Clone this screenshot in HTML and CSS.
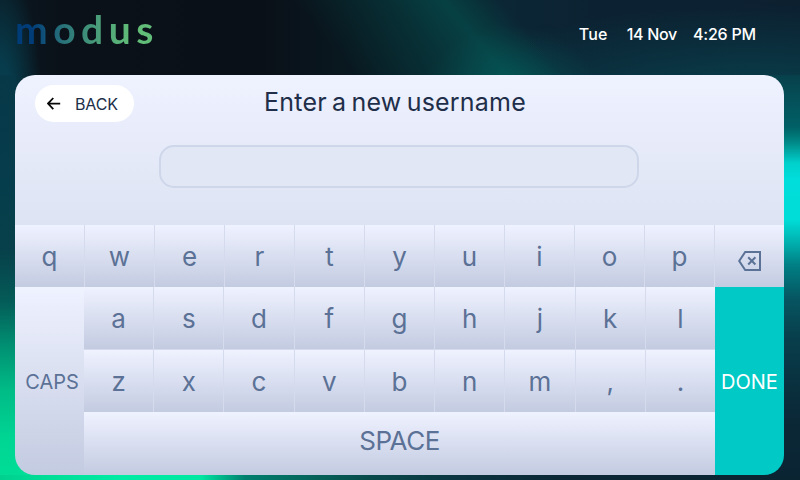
FILE: index.html
```html
<!DOCTYPE html>
<html lang="en">
<head>
<meta charset="utf-8">
<title>Enter a new username</title>
<link rel="stylesheet" href="styles.css">
</head>
<body>
<header class="topbar">
  <div class="logo"><span>modus</span></div>
  <div class="clock"><span class="day">Tue</span><span class="date">14 Nov</span><span class="time">4:26 PM</span></div>
</header>
<main class="panel">
  <section class="form">
    <div class="heading">
      <button class="back"><svg width="14" height="14" viewBox="0 0 14 14"><path d="M13.2 6.6H1.6M6.3 1L1 6.6l5.3 5.6" fill="none" stroke="#080808" stroke-width="1.8"/></svg><span>BACK</span></button>
      <h1><span>Enter a new username</span></h1>
    </div>
    <input class="field" type="text" aria-label="Username">
  </section>
  <section class="keyboard">
    <div class="row-top">
      <button>q</button><button>w</button><button>e</button><button>r</button><button>t</button><button>y</button><button>u</button><button>i</button><button>o</button><button>p</button>
      <button class="erase" aria-label="Backspace"><svg width="24" height="20" viewBox="0 0 24 20"><path d="M7.2 1H22v18H7.2L1.2 10z" fill="none" stroke="#5b7196" stroke-width="2"/><path d="M10.2 6.3l7.2 7.2M17.4 6.3l-7.2 7.2" fill="none" stroke="#5b7196" stroke-width="2"/></svg></button>
    </div>
    <div class="lower">
      <button class="caps"><span>CAPS</span></button>
      <div class="middle">
        <div class="letters">
          <button>a</button><button>s</button><button>d</button><button>f</button><button>g</button><button>h</button><button>j</button><button>k</button><button>l</button>
          <button>z</button><button>x</button><button>c</button><button>v</button><button>b</button><button>n</button><button>m</button><button>,</button><button>.</button>
        </div>
        <button class="space"><span>SPACE</span></button>
      </div>
      <button class="done"><span>DONE</span></button>
    </div>
  </section>
</main>
</body>
</html>
```
FILE: styles.css
```css
* { box-sizing: border-box; margin: 0; }

body {
  width: 800px;
  height: 480px;
  overflow: hidden;
  display: flex;
  flex-direction: column;
  font-family: Inter, "Liberation Sans", sans-serif;
  background:
    linear-gradient(90deg, #00d08e 0, #00dc95 40px, #00eba4 120px, #00e8a2 200px, #007f6e 245px, #056058 320px, #084a4b 370px, #0b3440 460px, #0b2634 570px, #0a2432 800px) 0 475px / 800px 5px no-repeat,
    linear-gradient(180deg, #07404b 0, #04535c 30px, #006065 52px, #008a88 68px, #00d0cc 88px, #00dedb 105px, #00dcd7 145px, #00abaa 170px, #007f84 190px, #065460 225px, #083f4c 262px, #0a2f3d 315px, #0b2837 345px, #0b2434 400px) 770px 75px / 30px 400px no-repeat,
    linear-gradient(180deg, #073848 0, #063d4c 110px, #07404a 175px, #045a57 225px, #008f72 270px, #00bb86 315px, #00d694 365px, #00dc95 400px) 0 75px / 15px 400px no-repeat,
    linear-gradient(90deg, #00dc95, #00e099) 15px 440px / 25px 35px no-repeat,
    radial-gradient(ellipse 42px 140px at 0 105px, #073c4c 30%, #073c4c00) 0 0 / 800px 100px no-repeat,
    radial-gradient(ellipse 90px 75px at 510px 100px, #00706a80, #00706a00) 0 0 / 800px 100px no-repeat,
    linear-gradient(50deg, #06464700 105px, #06464770 180px, #064a4bc0 220px, #06464790 236px, #06464700 264px) 240px 0 / 500px 100px no-repeat,
    radial-gradient(ellipse 340px 105px at 760px 110px, #084450, #08445000) 0 0 / 800px 100px no-repeat,
    linear-gradient(90deg, #0b1821 0, #0a1119 60px, #0a1018 260px, #091820 350px, #08222a 430px, #0b2634 500px, #0c2232 600px, #0c2030 800px);
}

button {
  border: 0;
  padding: 0;
  font-family: inherit;
  color: #5b7196;
}

.topbar {
  display: flex;
  justify-content: space-between;
  height: 75px;
  padding: 10px 44px 0 15px;
}

.logo {
  font: 700 39px/39px Lato, sans-serif;
  letter-spacing: 5.5px;
}

.logo span {
  background: linear-gradient(90deg, #003c78 12%, #27707a 32%, #499d79 57%, #61bd78 80%);
  background-clip: text;
  -webkit-background-clip: text;
  color: transparent;
}

.clock {
  display: flex;
  padding-top: 14px;
  font-size: 16px;
  line-height: 20px;
  font-weight: 500;
  color: #fff;
}

.day { margin-right: 19px; letter-spacing: .2px; }
.date { margin-right: 16px; letter-spacing: -.3px; }
.time { letter-spacing: -.2px; }

.panel {
  width: 769px;
  height: 400px;
  margin-left: 15px;
  border-radius: 20px;
  overflow: hidden;
}

.form {
  height: 150px;
  padding: 10px 20px 0;
  background: linear-gradient(#eff2ff, #dde3f3);
}

.heading {
  display: grid;
  grid-template-columns: 99px 1fr 99px;
  height: 37px;
}

.back {
  display: flex;
  align-items: center;
  gap: 14px;
  padding: 1px 0 0 12px;
  border-radius: 19px;
  background: #fff;
  color: #202e49;
  font-size: 16px;
}

.back span { letter-spacing: -.1px; }

h1 {
  padding-right: 9px;
  text-align: center;
  font-size: 25px;
  line-height: 35px;
  font-weight: 400;
  letter-spacing: .2px;
  word-spacing: -2px;
  color: #202e49;
}

.field {
  display: block;
  width: 480px;
  height: 43px;
  margin: 23px 0 0 124px;
  padding: 0 14px;
  border: 2px solid #ced6e9;
  border-radius: 15px;
  background: #e1e7f5;
  font: inherit;
  font-size: 20px;
  outline: 0;
}

.row-top {
  display: grid;
  grid-template-columns: repeat(11, 1fr);
  gap: 1px;
  height: 62px;
}

.row-top, .letters { background: #d5dbed; }

.row-top button, .letters button {
  padding-top: 1px;
  background: linear-gradient(#eff2ff, #c3cbe1);
  font-size: 26px;
  line-height: 32px;
}

.row-top .erase {
  display: flex;
  justify-content: center;
  align-items: center;
  padding-top: 10px;
}

.lower {
  display: grid;
  grid-template-columns: 69px 631px 69px;
  height: 188px;
}

.caps, .done {
  padding-top: 2px;
  font-size: 20px;
}

.caps {
  padding-left: 5px;
  background: linear-gradient(#eff2ff, #c3cbe1);
}

.done { background: #00c9c6; color: #fff; }

.letters {
  display: grid;
  grid-template-columns: repeat(9, 1fr);
  grid-template-rows: 62px 62px;
  gap: 1px;
}

.space {
  width: 100%;
  height: 63px;
  padding-bottom: 6px;
  background: linear-gradient(#eff2ff, #c3cbe1);
  font-size: 26px;
}

.space span { letter-spacing: -.5px; }
```
